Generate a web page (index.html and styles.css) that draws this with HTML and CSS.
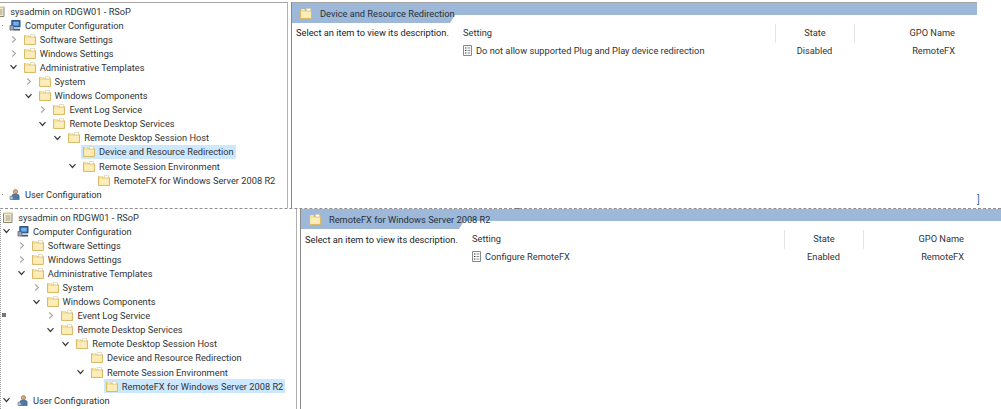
FILE: index.html
```html
<!DOCTYPE html>
<html lang="en">
<head>
<meta charset="utf-8">
<title>RSoP</title>
<link rel="stylesheet" href="styles.css">
</head>
<body>
<svg class="defs" width="0" height="0" aria-hidden="true">
  <symbol id="folder" viewBox="0 0 12 11">
    <path d="M.5 1.500h4l1 1.200h6v7.800H.5z" fill="#f3d47f" stroke="#d9bb6a"/>
    <path d="M1.200 3.600h9.600v6.200H1.200z" fill="#fdeeb9"/>
    <path d="M1.500 1.200h3v1.200h-3z" fill="#fdf3cb"/>
    <path d="M6.500.5h4v2.400h-4z" fill="#fff" stroke="#d8c89a" stroke-width=".6"/>
  </symbol>
  <symbol id="doc" viewBox="0 0 9 11">
    <path d="M.5.500h8v10h-8z" fill="#fbfbfb" stroke="#8b8b8b"/>
    <path d="M2 3h1.400M2 5.500h1.400M2 8h1.400" stroke="#333"/>
    <path d="M4.600 3h2.600M4.600 5.500h2.600M4.600 8h2.600" stroke="#8d8d8d"/>
  </symbol>
  <symbol id="computer" viewBox="0 0 13 12">
    <path d="M3 .5h9v7H3z" fill="#2f6fc4" stroke="#26456f"/>
    <path d="M4.500 2h6v4h-6z" fill="#6fb1ea"/>
    <path d="M1 6h4v5H1z" fill="#9da8b5" stroke="#4b5563" stroke-width=".7"/>
    <path d="M5 9.500h7v2H5z" fill="#47597a"/>
  </symbol>
  <symbol id="user" viewBox="0 0 13 12">
    <circle cx="7" cy="3" r="2.400" fill="#d9a878" stroke="#7c6047" stroke-width=".6"/>
    <path d="M3 11.500V8q0-2.200 2.500-2.200h3Q11 5.800 11 8v3.500z" fill="#4b78ab" stroke="#2d4a70" stroke-width=".6"/>
    <path d="M1 8h3.500v3.500H1z" fill="#b8c4d0" stroke="#5a6674" stroke-width=".6"/>
  </symbol>
  <symbol id="rsop" viewBox="0 0 11 11">
    <path d="M1 1.500h8.500v9H1z" fill="#f4edd7" stroke="#8d8669"/>
    <path d="M3 4h5M3 6h5M3 8h5" stroke="#a59c7a"/>
    <path d="M1 .5h9.500v1.500H1z" fill="#d9c98b"/>
  </symbol>
  <symbol id="open" viewBox="0 0 7 6"><path d="M.5 1.200 3.500 4.500 6.500 1.200" fill="none" stroke="#3c3c3c" stroke-width="1.200"/></symbol>
  <symbol id="closed" viewBox="0 0 6 7"><path d="M1.200.5 4.500 3.500 1.200 6.500" fill="none" stroke="#a6a6a6" stroke-width="1.100"/></symbol>
</svg>

<div class="top-row">
  <section class="window window-a">
    <nav class="tree">
      <div class="row l0"><span class="chev"></span><span class="node"><svg class="ico"><use href="#rsop"/></svg><span>sysadmin on RDGW01 - RSoP</span></span></div>
      <div class="row l1"><span class="chev"><i class="dot"></i></span><span class="node"><svg class="ico"><use href="#computer"/></svg><span>Computer Configuration</span></span></div>
      <div class="row l2"><span class="chev"><svg class="c-closed"><use href="#closed"/></svg></span><span class="node"><svg class="ico"><use href="#folder"/></svg><span>Software Settings</span></span></div>
      <div class="row l2"><span class="chev"><svg class="c-closed"><use href="#closed"/></svg></span><span class="node"><svg class="ico"><use href="#folder"/></svg><span>Windows Settings</span></span></div>
      <div class="row l2"><span class="chev"><svg class="c-open"><use href="#open"/></svg></span><span class="node"><svg class="ico"><use href="#folder"/></svg><span>Administrative Templates</span></span></div>
      <div class="row l3"><span class="chev"><svg class="c-closed"><use href="#closed"/></svg></span><span class="node"><svg class="ico"><use href="#folder"/></svg><span>System</span></span></div>
      <div class="row l3"><span class="chev"><svg class="c-open"><use href="#open"/></svg></span><span class="node"><svg class="ico"><use href="#folder"/></svg><span>Windows Components</span></span></div>
      <div class="row l4"><span class="chev"><svg class="c-closed"><use href="#closed"/></svg></span><span class="node"><svg class="ico"><use href="#folder"/></svg><span>Event Log Service</span></span></div>
      <div class="row l4"><span class="chev"><svg class="c-open"><use href="#open"/></svg></span><span class="node"><svg class="ico"><use href="#folder"/></svg><span>Remote Desktop Services</span></span></div>
      <div class="row l5"><span class="chev"><svg class="c-open"><use href="#open"/></svg></span><span class="node"><svg class="ico"><use href="#folder"/></svg><span>Remote Desktop Session Host</span></span></div>
      <div class="row l6"><span class="chev"></span><span class="node selected"><svg class="ico"><use href="#folder"/></svg><span>Device and Resource Redirection</span></span></div>
      <div class="row l6"><span class="chev"><svg class="c-open"><use href="#open"/></svg></span><span class="node"><svg class="ico"><use href="#folder"/></svg><span>Remote Session Environment</span></span></div>
      <div class="row l7"><span class="chev"></span><span class="node"><svg class="ico"><use href="#folder"/></svg><span>RemoteFX for Windows Server 2008 R2</span></span></div>
      <div class="row l1"><span class="chev"><i class="dot"></i></span><span class="node"><svg class="ico"><use href="#user"/></svg><span>User Configuration</span></span></div>
    </nav>
    <main class="detail">
      <header class="band"><div class="tab"><svg class="ico"><use href="#folder"/></svg><span>Device and Resource Redirection</span></div></header>
      <div class="content">
        <p class="desc">Select an item to view its description.</p>
        <div class="table">
          <div class="cell head"><span>Setting</span></div>
          <div class="cell head sep center">State</div>
          <div class="cell head sep end">GPO Name</div>
          <div class="cell setting"><svg class="doc"><use href="#doc"/></svg><span>Do not allow supported Plug and Play device redirection</span></div>
          <div class="cell center">Disabled</div>
          <div class="cell end">RemoteFX</div>
        </div>
      </div>
    </main>
  </section>
  <div class="strip"><span class="bracket">]</span></div>
</div>

<section class="window window-b">
  <i class="grip grip-left"></i>
  <i class="grip grip-top"></i>
  <nav class="tree">
    <div class="row l0"><span class="chev"></span><span class="node"><svg class="ico"><use href="#rsop"/></svg><span>sysadmin on RDGW01 - RSoP</span></span></div>
    <div class="row l1"><span class="chev"><svg class="c-open"><use href="#open"/></svg></span><span class="node"><svg class="ico"><use href="#computer"/></svg><span>Computer Configuration</span></span></div>
    <div class="row l2"><span class="chev"><svg class="c-closed"><use href="#closed"/></svg></span><span class="node"><svg class="ico"><use href="#folder"/></svg><span>Software Settings</span></span></div>
    <div class="row l2"><span class="chev"><svg class="c-closed"><use href="#closed"/></svg></span><span class="node"><svg class="ico"><use href="#folder"/></svg><span>Windows Settings</span></span></div>
    <div class="row l2"><span class="chev"><svg class="c-open"><use href="#open"/></svg></span><span class="node"><svg class="ico"><use href="#folder"/></svg><span>Administrative Templates</span></span></div>
    <div class="row l3"><span class="chev"><svg class="c-closed"><use href="#closed"/></svg></span><span class="node"><svg class="ico"><use href="#folder"/></svg><span>System</span></span></div>
    <div class="row l3"><span class="chev"><svg class="c-open"><use href="#open"/></svg></span><span class="node"><svg class="ico"><use href="#folder"/></svg><span>Windows Components</span></span></div>
    <div class="row l4"><span class="chev"><svg class="c-closed"><use href="#closed"/></svg></span><span class="node"><svg class="ico"><use href="#folder"/></svg><span>Event Log Service</span></span></div>
    <div class="row l4"><span class="chev"><svg class="c-open"><use href="#open"/></svg></span><span class="node"><svg class="ico"><use href="#folder"/></svg><span>Remote Desktop Services</span></span></div>
    <div class="row l5"><span class="chev"><svg class="c-open"><use href="#open"/></svg></span><span class="node"><svg class="ico"><use href="#folder"/></svg><span>Remote Desktop Session Host</span></span></div>
    <div class="row l6"><span class="chev"></span><span class="node"><svg class="ico"><use href="#folder"/></svg><span>Device and Resource Redirection</span></span></div>
    <div class="row l6"><span class="chev"><svg class="c-open"><use href="#open"/></svg></span><span class="node"><svg class="ico"><use href="#folder"/></svg><span>Remote Session Environment</span></span></div>
    <div class="row l7"><span class="chev"></span><span class="node selected"><svg class="ico"><use href="#folder"/></svg><span>RemoteFX for Windows Server 2008 R2</span></span></div>
    <div class="row l1"><span class="chev"><svg class="c-open"><use href="#open"/></svg></span><span class="node"><svg class="ico"><use href="#user"/></svg><span>User Configuration</span></span></div>
  </nav>
  <main class="detail">
    <header class="band"><div class="tab"><svg class="ico"><use href="#folder"/></svg><span>RemoteFX for Windows Server 2008 R2</span></div></header>
    <div class="content">
      <p class="desc">Select an item to view its description.</p>
      <div class="table">
        <div class="cell head"><span>Setting</span></div>
        <div class="cell head sep center">State</div>
        <div class="cell head sep end">GPO Name</div>
        <div class="cell setting"><svg class="doc"><use href="#doc"/></svg><span>Configure RemoteFX</span></div>
        <div class="cell center">Enabled</div>
        <div class="cell end">RemoteFX</div>
      </div>
    </div>
  </main>
</section>
</body>
</html>
```
FILE: styles.css
```css
* { box-sizing: border-box; }
html, body { margin: 0; height: 100%; overflow: hidden; background: #fff; }
body {
  width: 1001px;
  height: 409px;
  display: flex;
  flex-direction: column;
  font-family: Roboto, "Noto Sans", sans-serif;
  font-size: 9.25px;
  color: #333;
}
.defs { position: absolute; }

.top-row { display: flex; height: 208px; flex: none; }
.window { display: flex; min-width: 0; }
.window-a { --base: -19.8px; width: 977px; padding-top: 2px; }
.window-b {
  --base: -12.8px;
  flex: 1;
  min-height: 0;
  position: relative;
  border-top: 1px dashed #8f8f8f;
  border-left: 1px dotted #9a9a9a;
}
.strip { flex: 1; display: flex; align-items: flex-end; padding: 0 0 3px 0; }
.bracket { color: #3f66b0; font-size: 10px; line-height: 11px; }

.grip { position: absolute; width: 4px; height: 4px; background: #777; }
.grip-left { left: 1px; top: 104px; }
.grip-top { left: 514px; top: -1px; }

.tree { flex: none; overflow: hidden; background: #fff; }
.window-a .tree { width: 288px; border-top: 1px solid #a8a4a4; padding-top: 1px; border-right: 1px solid #b0b0b0; }
.window-b .tree { width: 296px; padding-top: 1px; border-right: 1px solid #b0b0b0; }

.row { display: flex; align-items: center; height: 14.1px; white-space: nowrap; }
.l0 { --lvl: 0; } .l1 { --lvl: 1; } .l2 { --lvl: 2; } .l3 { --lvl: 3; }
.l4 { --lvl: 4; } .l5 { --lvl: 5; } .l6 { --lvl: 6; } .l7 { --lvl: 7; }
.row { margin-left: calc(var(--base) + var(--lvl) * 14.8px); }

.chev { flex: none; width: 14px; display: flex; align-items: center; }
.c-open { width: 7px; height: 6px; }
.c-closed { width: 6px; height: 7px; margin-left: 1px; }
.dot { width: 1px; height: 1px; margin-left: 7px; background: #999; }

.node { display: flex; align-items: center; gap: 4px; height: 14px; padding-right: 2px; }
.selected { background: #cce8ff; margin-left: -2px; padding-left: 2px; }
.ico { width: 12px; height: 11px; flex: none; }

.detail { flex: 1; min-width: 0; display: flex; flex-direction: column; border-left: 1px solid #8a8a8a; margin-left: 3px; }

.band { height: 21px; flex: none; background: linear-gradient(#9db8d8 0 12px, #fff 12px); position: relative; }
.window-a .band { border-top: 1px solid #a8a4a4; }
.band::before {
  content: "";
  position: absolute;
  left: 0;
  top: 0;
  width: 163px;
  height: 20px;
  background: #9db8d8;
  clip-path: polygon(0 0, 100% 0, 100% 12px, calc(100% - 5px) 20px, 0 20px);
}
.tab {
  position: relative;
  display: flex;
  align-items: center;
  gap: 8px;
  height: 21px;
  padding-left: 8px;
  color: #26303c;
  white-space: nowrap;
}

.content { flex: 1; display: flex; }
.desc { flex: none; width: 171px; margin: 3px 0 0 0; padding-left: 4px; line-height: 14px; color: #222; }
.table {
  display: grid;
  grid-template-columns: 312px 79px 101px;
  grid-auto-rows: 17.5px;
}
.window-a .table { margin-top: 1px; }
.cell { display: flex; align-items: center; white-space: nowrap; }
.center { justify-content: center; }
.end { justify-content: flex-end; }
.head { height: 19px; padding-bottom: 2px; }
.sep { border-left: 1px solid #e4e4e4; }
.setting { gap: 4px; }
.doc { width: 9px; height: 11px; flex: none; }
```
